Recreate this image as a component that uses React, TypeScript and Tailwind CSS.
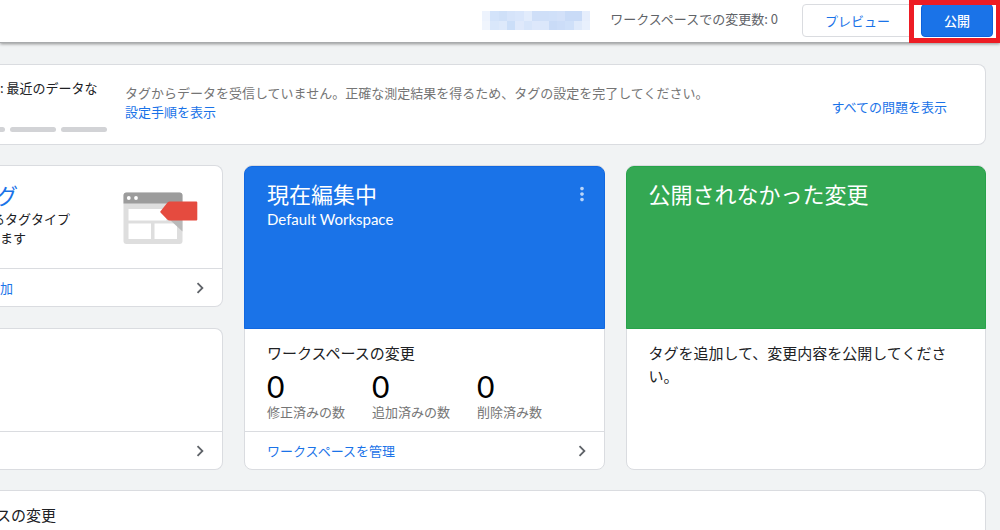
import { MdChevronRight, MdMoreVert } from "react-icons/md";

const MOSAIC = [
  "bg-[#edf3fd]", "bg-[#d3e3fa]", "bg-[#cfe0f8]", "bg-[#d6e4fa]", "bg-[#d9e6fb]", "bg-[#e2ecfc]", "bg-[#cfdff8]",
  "bg-[#cfdff8]", "bg-[#d0e0f9]", "bg-[#d3e1f9]", "bg-[#c9dbf7]", "bg-[#c9dbf7]", "bg-[#e6eefc]",
  "bg-[#f0f5fd]", "bg-[#d9e7fb]", "bg-[#dde9fb]", "bg-[#cbdef8]", "bg-[#dfe9fb]", "bg-[#d7e5fa]", "bg-[#dde8fb]",
  "bg-[#dbe7fb]", "bg-[#c9dbf7]", "bg-[#ccddf8]", "bg-[#cfe0f9]", "bg-[#dfeafb]", "bg-[#e8f0fd]",
];

const STATS = [
  { value: 0, label: "修正済みの数" },
  { value: 0, label: "追加済みの数" },
  { value: 0, label: "削除済み数" },
];

function Header() {
  return (
    <header className="relative z-10 flex h-[43px] items-start justify-end border-b border-[#a9abad] bg-white pr-[7px] pt-1 shadow-[0_1px_3px_rgba(0,0,0,0.4)]">
      <div className="mt-[7px] grid h-[19px] w-[108px] grid-cols-13 grid-rows-2" aria-hidden="true">
        {MOSAIC.map((tone, i) => (
          <span key={i} className={tone} />
        ))}
      </div>
      <p className="ml-5 mt-[5px] whitespace-nowrap text-[13px] leading-5 text-[#5f6368]">
        ワークスペースでの変更数: 0
      </p>
      <button
        type="button"
        className="ml-6 h-[33px] whitespace-nowrap rounded border border-[#dadce0] bg-white px-[22px] text-[13px] text-[#1a73e8]"
      >
        プレビュー
      </button>
      <div className="relative ml-2">
        <button
          type="button"
          className="h-[33px] whitespace-nowrap rounded border border-[#0d62dd] bg-[#1a73e8] px-[22px] text-[13px] font-medium text-white"
        >
          公開
        </button>
        <span className="pointer-events-none absolute -bottom-1.5 -left-3 -right-2 -top-1 border-[5px] border-[#ed1c24]" />
      </div>
    </header>
  );
}

function Alert() {
  return (
    <section className="flex h-[81px] rounded-r-lg border border-l-0 border-[#dadce0] bg-white">
      <div className="flex w-[125px] shrink-0 flex-col justify-between overflow-hidden pb-3 pt-[13px]">
        <p className="whitespace-nowrap text-[13px] leading-5 text-[#202124]">: 最近のデータな</p>
        <div className="-ml-[41px] flex gap-[5px]">
          <span className="h-[5px] w-[46px] shrink-0 rounded-full bg-[#d2d3d6]" />
          <span className="h-[5px] w-[46px] shrink-0 rounded-full bg-[#d2d3d6]" />
          <span className="h-[5px] w-[46px] shrink-0 rounded-full bg-[#d2d3d6]" />
        </div>
      </div>
      <div className="min-w-0 flex-1 pt-[18px] text-[13px] leading-[19px]">
        <p className="text-[#757575]">タグからデータを受信していません。正確な測定結果を得るため、タグの設定を完了してください。</p>
        <a href="#setup" className="text-[#1a73e8]">設定手順を表示</a>
      </div>
      <a href="#issues" className="mr-[38px] mt-8 whitespace-nowrap text-[13px] leading-5 text-[#1a73e8]">
        すべての問題を表示
      </a>
    </section>
  );
}

function CardLink({ label, name, inset }: { label: string; name: string; inset: string }) {
  return (
    <a
      href="#open"
      aria-label={name}
      className={`flex h-[38px] items-center justify-between border-t border-[#dadce0] pr-[11px] text-[13px] text-[#1a73e8] ${inset}`}
    >
      <span>{label}</span>
      <MdChevronRight className="size-[22px] text-[#5f6368]" />
    </a>
  );
}

function TagIllustration() {
  return (
    <svg viewBox="0 0 75 53" className="h-[53px] w-[75px]" aria-hidden="true">
      <rect x="0.5" y="0.5" width="59" height="51.5" rx="3" fill="#dedede" />
      <path d="M.5 11.500h59V3.500a3 3 0 0 0-3-3h-53a3 3 0 0 0-3 3z" fill="#9c9c9c" />
      <circle cx="5.800" cy="6" r="1.900" fill="#fff" />
      <circle cx="13" cy="6" r="1.900" fill="#fff" />
      <path d="M5.500 17h38v11.500h-38zM5.500 31.500h22.500v15.500H5.500zM31.500 31.500h22.500v15.500H31.500z" fill="#fff" />
      <path d="M40 21.500l19.500 18V11.500H46z" fill="#b9b9b9" />
      <path d="M37.500 19.200l7-8.700q1-1 2.200-1h26.600q1 0 1 1v17q0 1-1 1H46.500q-1.200 0-2.200-1l-6.800-7q-.6-.7 0-1.300z" fill="#e54b3f" />
    </svg>
  );
}

function LeftColumn() {
  return (
    <div className="flex flex-col gap-[21px]">
      <section className="flex h-[142px] flex-col justify-between overflow-hidden rounded-r-lg border border-l-0 border-[#dadce0] bg-white">
        <div className="flex justify-between pr-6">
          <div className="pt-[13px]">
            <h2 className="-ml-1 text-[22px] leading-[30px] text-[#1a73e8]">グ</h2>
            <p className="-ml-2 whitespace-nowrap text-[13px] leading-[19px] text-[#202124]">
              るタグタイプ
              <span className="block pl-2">ます</span>
            </p>
          </div>
          <div className="pt-[26px]">
            <TagIllustration />
          </div>
        </div>
        <CardLink label="加" name="追加" inset="pl-0" />
      </section>
      <section className="flex flex-1 flex-col justify-end rounded-r-lg border border-l-0 border-[#dadce0] bg-white">
        <CardLink label="" name="詳細" inset="pl-0" />
      </section>
    </div>
  );
}

function WorkspaceCard() {
  return (
    <section className="flex h-[305px] flex-col rounded-lg border border-[#dadce0] bg-white">
      <div className="-mx-px flex h-[163px] justify-between rounded-t-lg border border-[#1268e0] bg-[#1a73e8] pl-[22px] pr-[11px] pt-2.5 text-white">
        <div>
          <h2 className="text-[22px] leading-8">現在編集中</h2>
          <p className="font-['Lato','Noto_Sans_CJK_JP',sans-serif] text-[15px] leading-5">Default Workspace</p>
        </div>
        <button type="button" aria-label="メニュー" className="mt-1.5 size-[22px] text-white/70">
          <MdMoreVert className="size-[22px]" />
        </button>
      </div>
      <div className="flex-1 pl-[22px] pt-3">
        <h3 className="text-[15px] leading-[23px] text-[#202124]">ワークスペースの変更</h3>
        <dl className="mt-1 flex">
          {STATS.map((s) => (
            <div key={s.label} className="flex w-[105px] flex-col-reverse">
              <dt className="text-[13px] leading-4 text-[#757575]">{s.label}</dt>
              <dd className="font-['Lato',sans-serif] text-[30px] leading-9 text-black">{s.value}</dd>
            </div>
          ))}
        </dl>
      </div>
      <CardLink label="ワークスペースを管理" name="ワークスペースを管理" inset="pl-[22px]" />
    </section>
  );
}

function PublishCard() {
  return (
    <section className="h-[305px] rounded-lg border border-[#dadce0] bg-white">
      <div className="-mx-px h-[163px] rounded-t-lg border border-[#27a34a] bg-[#34a853] pl-[22px] pt-2.5 text-white">
        <h2 className="text-[22px] leading-8">公開されなかった変更</h2>
      </div>
      <p className="pl-[22px] pr-9 pt-3 text-[15px] leading-[23px] text-[#202124]">
        タグを追加して、変更内容を公開してください。
      </p>
    </section>
  );
}

export default function App() {
  return (
    <div className="flex h-screen flex-col overflow-hidden bg-[#f1f3f4] font-['Noto_Sans_CJK_JP',sans-serif]">
      <Header />
      <main className="flex flex-1 flex-col gap-5 pr-[14px] pt-[21px]">
        <Alert />
        <div className="grid grid-cols-[223px_1fr_1fr] gap-[21px]">
          <LeftColumn />
          <WorkspaceCard />
          <PublishCard />
        </div>
        <section className="flex-1 rounded-tr-lg border-r border-t border-[#dadce0] bg-white pt-3">
          <h3 className="-ml-1 text-[15px] leading-[23px] text-[#202124]">スの変更</h3>
        </section>
      </main>
    </div>
  );
}
